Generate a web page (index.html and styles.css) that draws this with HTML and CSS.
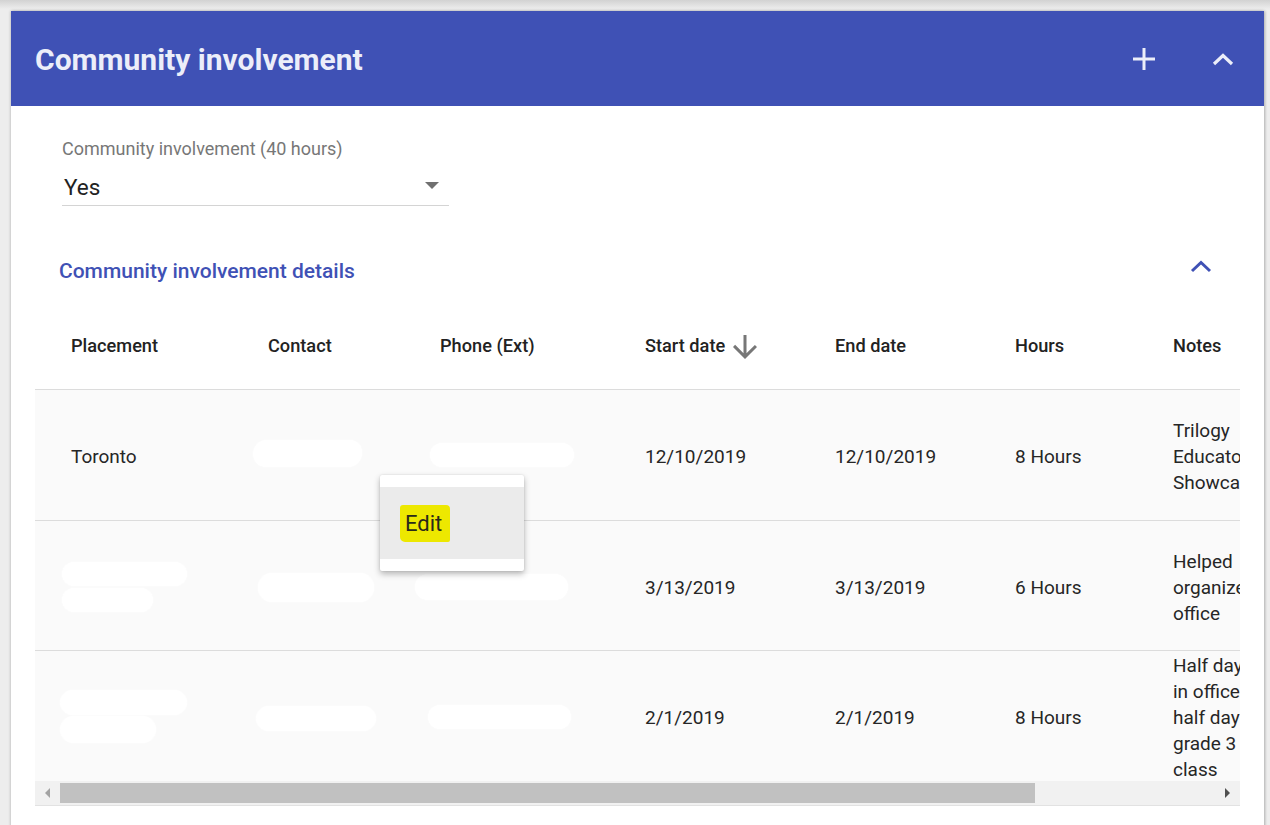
FILE: index.html
```html
<!DOCTYPE html>
<html lang="en">
<head>
<meta charset="utf-8">
<title>Community involvement</title>
<link rel="stylesheet" href="styles.css">
</head>
<body>
<section class="card">
  <header class="card-head">
    <h1 class="card-title">Community involvement</h1>
    <div class="head-actions">
      <button class="icon-btn" aria-label="Add">
        <svg width="26" height="26" viewBox="0 0 26 26"><path d="M13 2v22M2 13h22" stroke="currentColor" stroke-width="3" fill="none"/></svg>
      </button>
      <button class="icon-btn" aria-label="Collapse">
        <svg width="22" height="14" viewBox="0 0 22 14"><path d="M2 12L11 3.5 20 12" stroke="currentColor" stroke-width="3.2" fill="none"/></svg>
      </button>
    </div>
  </header>

  <div class="card-body">
    <div class="field">
      <div class="field-label">Community involvement (40 hours)</div>
      <div class="select">
        <span class="select-value">Yes</span>
        <span class="select-caret"></span>
      </div>
    </div>

    <div class="details-head">
      <h2 class="details-title">Community involvement details</h2>
      <svg class="details-chev" width="22" height="14" viewBox="0 0 22 14"><path d="M2 12L11 3.5 20 12" stroke="currentColor" stroke-width="3" fill="none"/></svg>
    </div>

    <div class="table-wrap">
      <div class="table-view">
        <div class="grid">
          <div class="th">Placement</div>
          <div class="th">Contact</div>
          <div class="th">Phone (Ext)</div>
          <div class="th">Start date
            <svg class="sort" width="36" height="36" viewBox="0 0 24 24"><path d="M20 12l-1.41-1.41L13 16.17V4h-2v12.17l-5.58-5.59L4 12l8 8 8-8z" fill="currentColor"/></svg>
          </div>
          <div class="th">End date</div>
          <div class="th">Hours</div>
          <div class="th">Notes</div>
          <div class="th"></div>

          <div class="td">Toronto</div>
          <div class="td"><span class="blob b1"></span></div>
          <div class="td"><span class="blob b2"></span></div>
          <div class="td">12/10/2019</div>
          <div class="td">12/10/2019</div>
          <div class="td">8 Hours</div>
          <div class="td notes">Trilogy Educators Showcase</div>
          <div class="td"></div>

          <div class="td"><span class="blob b3"></span><span class="blob b4"></span></div>
          <div class="td"><span class="blob b5"></span></div>
          <div class="td"><span class="blob b6"></span></div>
          <div class="td">3/13/2019</div>
          <div class="td">3/13/2019</div>
          <div class="td">6 Hours</div>
          <div class="td notes">Helped organize office</div>
          <div class="td"></div>

          <div class="td last"><span class="blob b7"></span><span class="blob b8"></span></div>
          <div class="td last"><span class="blob b9"></span></div>
          <div class="td last"><span class="blob b10"></span></div>
          <div class="td last">2/1/2019</div>
          <div class="td last">2/1/2019</div>
          <div class="td last">8 Hours</div>
          <div class="td last notes">Half day in office half day grade 3 class</div>
          <div class="td last"></div>
        </div>
      </div>

      <div class="scrollbar">
        <span class="sb-btn"><span class="tri-left"></span></span>
        <span class="sb-track"><span class="sb-thumb"></span></span>
        <span class="sb-btn"><span class="tri-right"></span></span>
      </div>

      <div class="menu">
        <div class="menu-item"><span class="hl">Edit</span></div>
      </div>
    </div>
  </div>
</section>
</body>
</html>
```

FILE: styles.css
```css
* { box-sizing: border-box; }

html, body { margin: 0; padding: 0; }

body {
  width: 1270px;
  height: 825px;
  overflow: hidden;
  background: linear-gradient(#d2d2d2, #ededed 9px, #ededed);
  font-family: Roboto, "Noto Sans", "Liberation Sans", sans-serif;
  color: #212121;
  padding: 11px 6px 0 11px;
}

.card {
  background: #fff;
  width: 1253px;
  height: 900px;
  box-shadow: 0 0 3px rgba(0,0,0,0.28), 2px 0 2px rgba(0,0,0,0.08);
}

.card-head {
  height: 95px;
  background: #3f51b5;
  display: flex;
  align-items: center;
  justify-content: space-between;
  padding: 0 30px 0 24px;
}

.card-title {
  margin: 0;
  font-size: 30px;
  font-weight: 700;
  color: #eceef9;
  margin-top: 2px;
}

.head-actions {
  display: flex;
  align-items: center;
  gap: 55px;
}

.icon-btn {
  border: 0;
  background: none;
  padding: 0;
  color: #eceef9;
  display: flex;
  align-items: center;
  justify-content: center;
}

.card-body {
  padding: 0 24px;
}

.field {
  width: 387px;
  margin: 32px 0 0 27px;
}

.field-label {
  font-size: 18px;
  line-height: 22px;
  color: #777;
}

.select {
  height: 46px;
  padding-top: 8px;
  display: flex;
  align-items: center;
  justify-content: space-between;
  border-bottom: 1px solid #d4d4d4;
  padding-left: 2px;
  padding-right: 10px;
}

.select-value {
  font-size: 22.5px;
  color: #222;
}

.select-caret {
  width: 0;
  height: 0;
  border-left: 7px solid transparent;
  border-right: 7px solid transparent;
  border-top: 7px solid #707070;
  margin-top: -2px;
}

.details-head {
  margin-top: 40px;
  height: 48px;
  display: flex;
  align-items: center;
  justify-content: space-between;
  padding: 0 28px 0 24px;
}

.details-title {
  margin: 0;
  font-size: 21px;
  font-weight: 500;
  color: #3f51b5;
  margin-top: 2px;
}

.details-chev {
  color: #3f51b5;
  margin-top: -8px;
}

.table-wrap {
  position: relative;
  margin-top: 7px;
  width: 1205px;
}

.table-view {
  overflow: hidden;
}

.grid {
  display: grid;
  width: 1427px;
  grid-template-columns: 197px 172px 205px 190px 180px 158px 172px 153px;
  grid-template-rows: 89px 131px 130px 130px;
}

.th {
  display: flex;
  align-items: center;
  padding-left: 36px;
  font-size: 18.2px;
  font-weight: 500;
  color: #222;
  border-bottom: 1px solid #dcdcdc;
  background: #fff;
}

.sort {
  color: #777;
  margin-left: 2px;
  margin-top: 4px;
}

.td {
  position: relative;
  display: flex;
  align-items: center;
  padding-left: 36px;
  padding-top: 4px;
  font-size: 19px;
  line-height: 26px;
  color: #262626;
  background: #fafafa;
  border-bottom: 1px solid #dcdcdc;
}

.td.last { border-bottom: 0; padding-top: 3px; }

.notes {
  padding-right: 54px;
  width: 172px;
}

.blob {
  position: absolute;
  background: #fff;
  border-radius: 14px;
  box-shadow: 0 0 2px rgba(255,255,255,0.9);
}

.b1 { left: 21px; top: 50px; width: 109px; height: 27px; border-radius: 14px 12px 14px 13px; }
.b2 { left: 26px; top: 53px; width: 144px; height: 24px; }
.b3 { left: 27px; top: 41px; width: 125px; height: 24px; }
.b4 { left: 27px; top: 67px; width: 91px; height: 24px; }
.b5 { left: 26px; top: 52px; width: 116px; height: 29px; }
.b6 { left: 11px; top: 53px; width: 153px; height: 26px; }
.b7 { left: 25px; top: 39px; width: 127px; height: 25px; }
.b8 { left: 25px; top: 65px; width: 96px; height: 27px; }
.b9 { left: 24px; top: 55px; width: 120px; height: 25px; }
.b10 { left: 24px; top: 54px; width: 143px; height: 24px; }

.scrollbar {
  display: flex;
  height: 25px;
  background: #f1f1f1;
  border-bottom: 1px solid #e2e2e2;
}

.sb-btn {
  width: 25px;
  display: flex;
  align-items: center;
  justify-content: center;
}

.sb-track {
  flex: 1;
  padding: 2px 0 2px 0;
  display: flex;
}

.sb-thumb {
  width: 975px;
  background: #c1c1c1;
}

.tri-left {
  width: 0; height: 0;
  border-top: 5px solid transparent;
  border-bottom: 5px solid transparent;
  border-right: 5px solid #a3a3a3;
}

.tri-right {
  width: 0; height: 0;
  border-top: 5px solid transparent;
  border-bottom: 5px solid transparent;
  border-left: 5px solid #505050;
}

.menu {
  position: absolute;
  left: 345px;
  top: 174px;
  width: 144px;
  padding: 12px 0;
  background: #fff;
  border-radius: 2px;
  box-shadow: 0 3px 6px rgba(0,0,0,0.28), 0 0 2px rgba(0,0,0,0.12);
}

.menu-item {
  height: 72px;
  background: #ebebeb;
  display: flex;
  align-items: center;
  padding-left: 20px;
}

.hl {
  background: #ede800;
  font-size: 22px;
  color: #2a2a1a;
  padding: 6px 8px 6px 5px;
  border-radius: 3px 4px 2px 5px;
}
```
